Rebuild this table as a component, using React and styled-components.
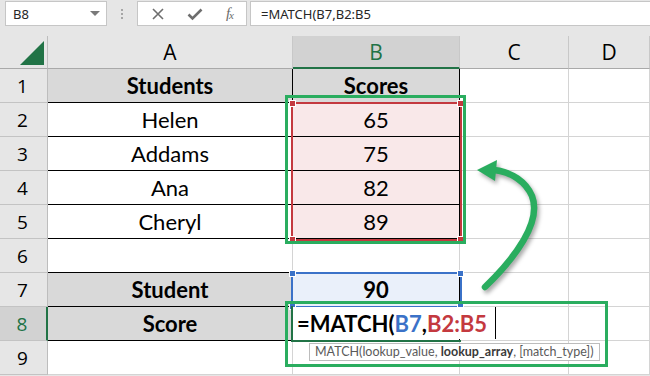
import React from "react";
import styled, { createGlobalStyle } from "styled-components";

const GlobalStyle = createGlobalStyle`
  html, body {
    margin: 0;
    padding: 0;
    background: #e6e6e6;
    overflow: hidden;
  }
`;

const GREEN = "#2aad5f";
const EXCEL_GREEN = "#217346";

const Page = styled.div`
  position: relative;
  width: 650px;
  height: 376px;
  overflow: hidden;
  background: #e6e6e6;
  font-family: "Open Sans", "Noto Sans", sans-serif;
`;

/* ---------- formula bar ---------- */

const Toolbar = styled.div`
  display: flex;
  align-items: flex-start;
  height: 36px;
  padding: 1px 0 0 5px;
  box-sizing: border-box;
`;

const Field = styled.div`
  height: 25px;
  box-sizing: border-box;
  background: #fff;
  border: 1px solid #c6c6c6;
  display: flex;
  align-items: center;
  font-family: "Noto Sans", "Open Sans", sans-serif;
  font-size: 13px;
  color: #262626;
`;

const NameBox = styled(Field)`
  width: 102px;
  padding: 0 6px 0 7px;
  justify-content: space-between;
`;

const Caret = styled.span`
  width: 0;
  height: 0;
  border-left: 5px solid transparent;
  border-right: 5px solid transparent;
  border-top: 5px solid #7a7a7a;
`;

const Grip = styled.div`
  width: 30px;
  height: 25px;
  display: flex;
  flex-direction: column;
  align-items: center;
  justify-content: center;
  gap: 2px;

  span {
    width: 2px;
    height: 2px;
    background: #a6a6a6;
  }
`;

const FxBox = styled(Field)`
  width: 110px;
  padding: 0 13px 0 13px;
  justify-content: space-between;
`;

const Fx = styled.span`
  font-family: "Liberation Serif", serif;
  font-style: italic;
  font-size: 15px;
  color: #6b6b6b;
  letter-spacing: -1px;

  sub {
    font-size: 11px;
    vertical-align: -1px;
  }
`;

const FormulaInput = styled(Field)`
  flex: 1;
  margin-left: 3px;
  padding-left: 10px;
  border-right: none;
`;

/* ---------- sheet ---------- */

const Sheet = styled.div`
  display: grid;
  grid-template-columns: 48px 245px 167px 109px 1fr;
  grid-template-rows: 33px repeat(9, 34px);
  background: #fff;
`;

const Corner = styled.div`
  background: #e6e6e6;
  border-right: 1px solid #bdbdbd;
  border-bottom: 1px solid #a9a9a9;
  display: flex;
  align-items: flex-end;
  justify-content: flex-end;
  padding: 0 3px 3px 0;
`;

const ColHead = styled.div`
  background: ${({ $active }) => ($active ? "#d2d2d2" : "#e6e6e6")};
  border-right: 1px solid #c8c8c8;
  border-bottom: ${({ $active }) =>
    $active ? `2px solid ${EXCEL_GREEN}` : "1px solid #a9a9a9"};
  color: ${({ $active }) => ($active ? EXCEL_GREEN : "#000")};
  display: flex;
  align-items: center;
  justify-content: center;
  font-size: 21px;
  padding-top: ${({ $active }) => ($active ? "1px" : "0")};
`;

const RowHead = styled.div`
  background: ${({ $active }) => ($active ? "#d2d2d2" : "#e6e6e6")};
  border-right: ${({ $active }) =>
    $active ? `2px solid ${EXCEL_GREEN}` : "1px solid #bdbdbd"};
  border-bottom: 1px solid #c3c3c3;
  color: ${({ $active }) => ($active ? EXCEL_GREEN : "#000")};
  display: flex;
  align-items: center;
  justify-content: center;
  font-size: 19px;
  padding-right: 2px;
`;

const Cell = styled.div`
  background: ${({ $fill }) => $fill || "#fff"};
  border-right: 1px solid ${({ $edge }) => ($edge ? "#000" : "#d4d4d4")};
  border-bottom: 1px solid ${({ $line }) => ($line ? "#000" : "#d4d4d4")};
  display: flex;
  align-items: center;
  justify-content: center;
  font-family: "Lato", "Liberation Sans", sans-serif;
  font-size: 22px;
  font-weight: ${({ $bold }) => ($bold ? 700 : 400)};
  color: #000;
`;

/* ---------- overlays ---------- */

const RefBox = styled.div`
  position: absolute;
  left: ${({ $x }) => $x}px;
  top: ${({ $y }) => $y}px;
  width: ${({ $w }) => $w}px;
  height: ${({ $h }) => $h}px;
  box-sizing: border-box;
  border: 2px solid ${({ $color }) => $color};
`;

const Handle = styled.span`
  position: absolute;
  width: 5px;
  height: 5px;
  background: ${({ $color }) => $color};
  border: 1px solid #fff;
  ${({ $top }) => ($top ? "top: -4px;" : "bottom: -4px;")}
  ${({ $left }) => ($left ? "left: -4px;" : "right: -4px;")}
`;

const Highlight = styled.div`
  position: absolute;
  left: ${({ $x }) => $x}px;
  top: ${({ $y }) => $y}px;
  width: ${({ $w }) => $w}px;
  height: ${({ $h }) => $h}px;
  box-sizing: border-box;
  border: 3px solid ${GREEN};
  pointer-events: none;
`;

const Editor = styled.div`
  position: absolute;
  left: 291px;
  top: 306px;
  width: 170px;
  height: 36px;
  box-sizing: border-box;
  border-left: 2px solid ${EXCEL_GREEN};
  border-bottom: 2px solid ${EXCEL_GREEN};
  display: flex;
  align-items: center;
  white-space: nowrap;
`;

const EditText = styled.div`
  display: flex;
  align-items: center;
  height: 32px;
  background: #fff;
  padding: 0 8px 0 4px;
  font-family: "Lato", "Liberation Sans", sans-serif;
  font-size: 22px;
  font-weight: 700;
  color: #000;
  border-right: 1px solid #000;
`;

const Ref = styled.span`
  color: ${({ $color }) => $color};
`;

const Tip = styled.div`
  position: absolute;
  left: 309px;
  top: 343px;
  height: 18px;
  box-sizing: border-box;
  padding: 0 5px;
  background: #fff;
  border: 1px solid #bcbcbc;
  font-family: "Lato", "Noto Sans", sans-serif;
  font-size: 12.5px;
  line-height: 16px;
  color: #5a5a5a;
  white-space: nowrap;

  b {
    color: #3a3a3a;
  }
`;

const ArrowSvg = styled.svg`
  position: absolute;
  left: 0;
  top: 0;
  pointer-events: none;
  filter: drop-shadow(2px 3px 2px rgba(0, 0, 0, 0.35));
`;

const columns = ["A", "B", "C", "D"];

const rows = [
  { a: "Students", b: "Scores", fillA: "#d9d9d9", fillB: "#d9d9d9", bold: true, table: true },
  { a: "Helen", b: "65", fillB: "#f9e8e9", table: true },
  { a: "Addams", b: "75", fillB: "#f9e8e9", table: true },
  { a: "Ana", b: "82", fillB: "#f9e8e9", table: true },
  { a: "Cheryl", b: "89", fillB: "#f9e8e9", table: true },
  { a: "", b: "", topOfNext: true },
  { a: "Student", b: "90", fillA: "#d9d9d9", fillB: "#eaf0fa", bold: true, table: true },
  { a: "Score", b: "", fillA: "#d9d9d9", bold: true, table: true },
  { a: "", b: "" },
];

const Corners = ({ color }) => (
  <>
    <Handle $color={color} $top $left />
    <Handle $color={color} $top />
    <Handle $color={color} $left />
    <Handle $color={color} />
  </>
);

export default function App() {
  return (
    <Page>
      <GlobalStyle />
      <Toolbar>
        <NameBox>
          B8
          <Caret />
        </NameBox>
        <Grip>
          <span />
          <span />
          <span />
        </Grip>
        <FxBox>
          <svg width="14" height="14" viewBox="0 0 14 14">
            <path d="M2 2 L12 12 M12 2 L2 12" stroke="#6e6e6e" strokeWidth="1.6" />
          </svg>
          <svg width="16" height="14" viewBox="0 0 16 14">
            <path d="M1.5 7.5 L5.5 11.5 L14.5 2.5" stroke="#6e6e6e" strokeWidth="2.6" fill="none" />
          </svg>
          <Fx>
            f<sub>x</sub>
          </Fx>
        </FxBox>
        <FormulaInput>=MATCH(B7,B2:B5</FormulaInput>
      </Toolbar>

      <Sheet>
        <Corner>
          <svg width="24" height="24" viewBox="0 0 24 24">
            <path d="M24 0 L24 24 L0 24 Z" fill={EXCEL_GREEN} />
          </svg>
        </Corner>
        {columns.map((c) => (
          <ColHead key={c} $active={c === "B"}>
            {c}
          </ColHead>
        ))}
        {rows.map((r, i) => {
          const n = i + 1;
          const line = r.table || r.topOfNext;
          return (
            <React.Fragment key={n}>
              <RowHead $active={n === 8}>{n}</RowHead>
              <Cell $fill={r.fillA} $bold={r.bold} $edge={r.table} $line={line}>
                {r.a}
              </Cell>
              <Cell $fill={r.fillB} $bold={r.bold} $edge={r.table} $line={line}>
                {r.b}
              </Cell>
              <Cell />
              <Cell />
            </React.Fragment>
          );
        })}
      </Sheet>

      {/* range references from the formula being typed */}
      <RefBox $x={291} $y={102} $w={171} $h={139} $color="#c4393f">
        <Corners color="#c4393f" />
      </RefBox>
      <RefBox $x={291} $y={272} $w={171} $h={36} $color="#3b72c8">
        <Corners color="#3b72c8" />
      </RefBox>

      <Editor>
        <EditText>
          =MATCH(<Ref $color="#3b72c8">B7</Ref>,<Ref $color="#c4393f">B2:B5</Ref>
        </EditText>
      </Editor>
      <Tip>
        MATCH(lookup_value, <b>lookup_array</b>, [match_type])
      </Tip>

      <Highlight $x={285} $y={95} $w={181} $h={149} />
      <Highlight $x={285} $y={301} $w={323} $h={66} />

      <ArrowSvg width="650" height="376" viewBox="0 0 650 376">
        <path
          d="M485 287 C515 258, 542 222, 532 196 C526 182, 512 172, 494 170"
          stroke={GREEN}
          strokeWidth="6.5"
          strokeLinecap="round"
          fill="none"
        />
        <path d="M477 170 L497 160 L495 181 Z" fill={GREEN} />
      </ArrowSvg>
    </Page>
  );
}
